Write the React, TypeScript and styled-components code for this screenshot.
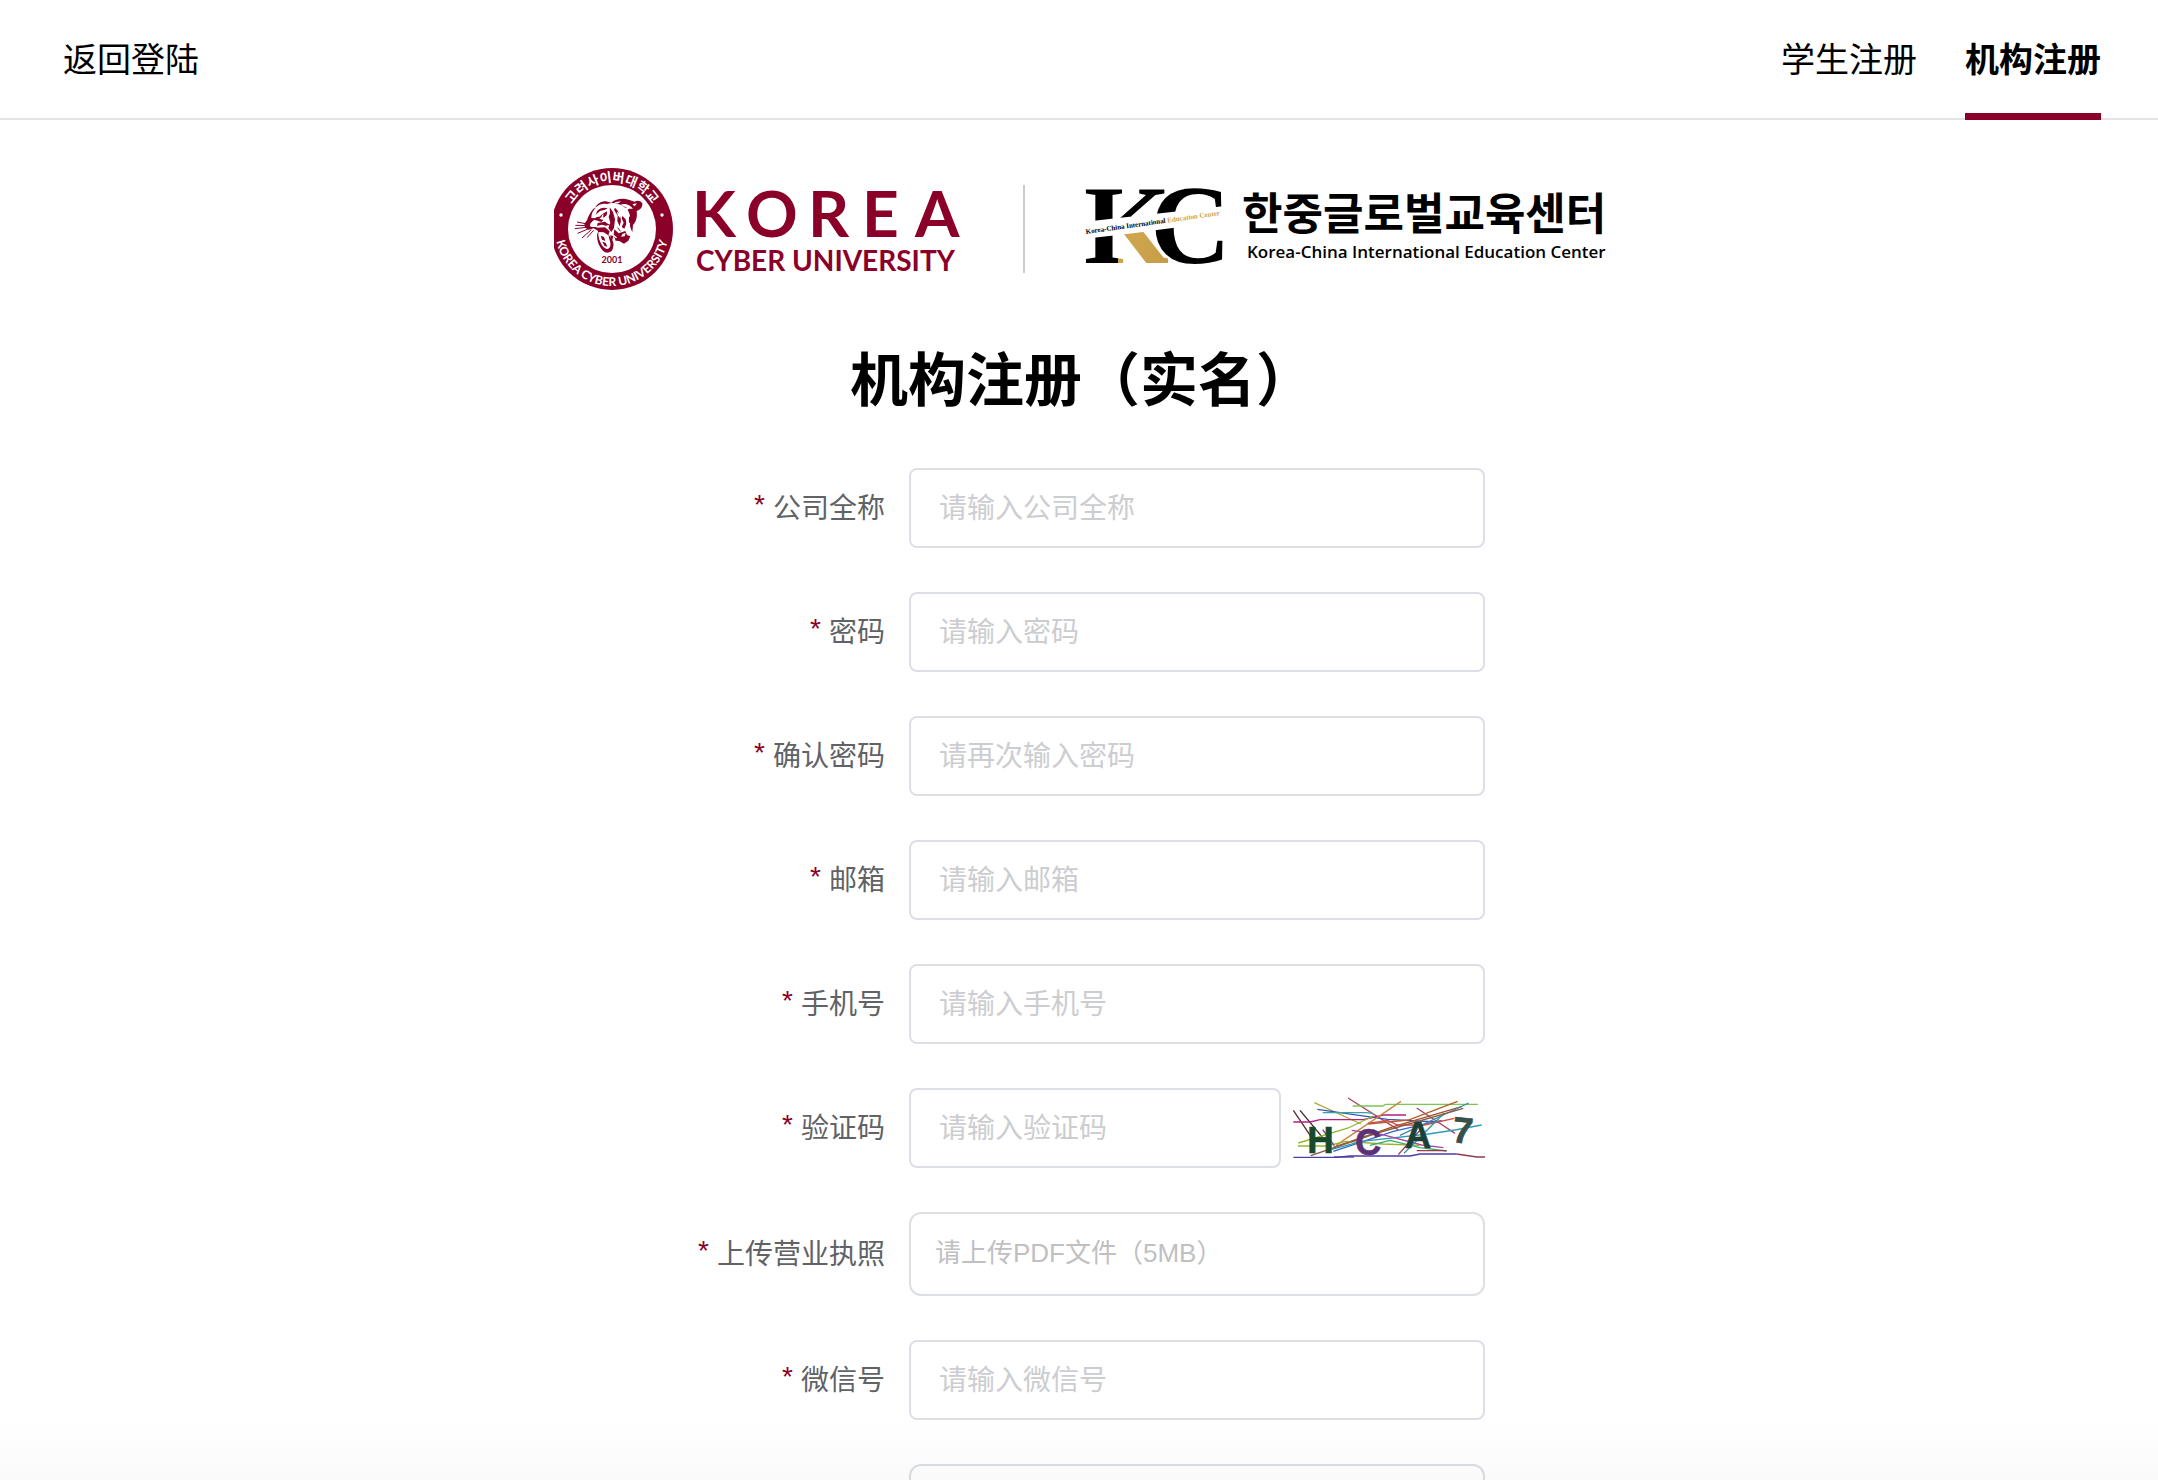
import React from "react";
import styled, { createGlobalStyle } from "styled-components";

const sans = `"Liberation Sans", "Noto Sans CJK SC", sans-serif`;
const brand = "#8a0029";

const GlobalStyle = createGlobalStyle`
  *, *::before, *::after { box-sizing: border-box; }
  body { margin: 0; background: #fff; color: #000; font-family: ${sans}; }
`;

const Page = styled.div`
  display: flex;
  flex-direction: column;
  height: 100vh;
`;

const Header = styled.header`
  display: flex;
  flex: none;
  align-items: stretch;
  justify-content: space-between;
  height: 120px;
  padding: 0 57px 0 63px;
  border-bottom: 2px solid #e4e4e4;
`;

const Tabs = styled.nav`
  display: flex;
  gap: 48px;
`;

const NavLink = styled.a<{ $active?: boolean }>`
  display: flex;
  align-items: center;
  margin-bottom: -2px;
  padding-top: 2px;
  border-bottom: 7px solid ${(p) => (p.$active ? brand : "transparent")};
  color: #000;
  font-size: 34px;
  font-weight: ${(p) => (p.$active ? 700 : 400)};
  text-decoration: none;
`;

const Main = styled.main`
  display: flex;
  flex: 1;
  flex-direction: column;
  align-items: center;
  min-height: 0;
  overflow-y: auto;
  scrollbar-width: none;
  padding: 40px 0 0 6px;
`;

const Logos = styled.svg`
  display: block;
  flex: none;
  width: 1056px;
  max-width: 100%;
  height: 140px;
`;

const Title = styled.h1`
  margin: 40px 0 46px;
  font-size: 58px;
  line-height: 82px;
  font-weight: 700;
`;

const Form = styled.form`
  display: flex;
  flex-direction: column;
  gap: 44px;
  width: 806px;
  max-width: 100%;
`;

const Row = styled.div`
  display: grid;
  grid-template-columns: 230px minmax(0, 1fr);
  align-items: center;
`;

const Label = styled.label`
  padding: 2px 24px 0 0;
  color: #606266;
  font-size: 28px;
  line-height: 40px;
  text-align: right;
  &::before {
    content: "*";
    margin-right: 8px;
    color: ${brand};
    vertical-align: 4px;
    line-height: 1;
  }
`;

const Control = styled.div`
  display: flex;
  grid-column: 2;
  align-items: center;
  gap: 12px;
`;

const Input = styled.input`
  flex: 1;
  min-width: 0;
  height: 80px;
  padding: 2px 28px 0;
  border: 2px solid #dcdfe6;
  border-radius: 8px;
  outline: none;
  background: #fff;
  color: #606266;
  font-family: inherit;
  font-size: 28px;
  &::placeholder { color: #cccdd0; opacity: 1; }
  &:focus { border-color: ${brand}; }
`;

const Upload = styled.label`
  display: flex;
  flex: 1;
  align-items: center;
  height: 84px;
  padding: 0 24px 8px;
  border: 2px solid #dcdfe3;
  border-radius: 12px;
  color: #c0c0c2;
  font-size: 26px;
  cursor: pointer;
`;

const FileInput = styled.input`
  width: 0;
  height: 0;
  opacity: 0;
`;

const CaptchaButton = styled.button`
  flex: none;
  width: 192px;
  height: 64px;
  padding: 0;
  border: 0;
  background: none;
  cursor: pointer;
  svg { display: block; width: 100%; height: 100%; }
`;

const BottomFade = styled.div`
  position: fixed;
  right: 0;
  bottom: 0;
  left: 0;
  height: 60px;
  background: linear-gradient(rgba(0, 0, 0, 0), rgba(0, 0, 0, 0.02));
  pointer-events: none;
`;

function Tiger() {
  return (
    <g transform="translate(16 30) scale(.3333)" fill={brand}>
      <path d="M74 56C80 42 92 34 108 34l16 4c14-12 34-14 52-9l18 6c9-5 18-3 23 5 1 12-6 20-17 23 2 16 0 31-11 42l-2 22c-5-10-8-19-7-27-8-7-5-17 0-22-2-12-7-21-17-27-12-9-25-12-39-12l-13 3c-12-3-24 0-37 12Z" />
      <path d="M70 56C60 68 55 78 51 91l-8 10 2 12 12 6 14-4 14 8-4 12c0 12 2 24 10 37 8 16 21 20 33 12 6-6 7-18 6-26l-8-15-7-10 3 15c5 12 5 22-1 27-8 5-17-2-23-12-6-12-10-24-9-34l5-12-13-6c-9 1-16 0-20-5l11-13 14-8-18-1c0-13 5-23 13-30Z" />
      <path d="M82 62c9-9 20-11 31-7l-10 5-12 2-14 12ZM78 82l20-4-10 8 12 4-6 6-20-6ZM100 70l12-6-2 12-10 8ZM119 52l10 14 6 22-3 26-8 12-9-12 6-16-5-18 4-10ZM135 53c10 9 17 23 18 40l-4 16-7-16 1-16-11-18ZM157 78l10 10 2 14-6 14-8-5 6-13-6-13ZM83 99l22-4 12 10-9 2-13-3-14 4ZM80 113l25-1 14 12-4 12-14-9-16-1ZM133 118l13 12 20-7 5 12 10 4-6 13-13 9-13-7-15-3 7-9-10-8ZM92 137l10 4 4 12-10-4ZM97 155l10 3 5 12-9-3ZM121 136l9 2-3 12 3 16-8-8Z" />
      <path fill="#fff" d="M152 44c14-5 29 2 37 12l-12 0c-7 7-12 6-19 4l12-7ZM126 42l12-6 16-2-9 6ZM158 66l16 2 5 8-12-3ZM169 86l8-3-1 18-5 3ZM140 65l10 6 1 14-7-8ZM98 47l12-4 12 4-14 3ZM187 43l14-3-7 9ZM158 131l9-2-3 10-11 1ZM73 97l9-6 2 5-7 5Z" />
      <g fill="none" stroke={brand} strokeWidth="3">
        <path d="M61 104l-40-8M58 111l-44 5M59 115l-36 15M64 119l-28 25M71 121l-20 22M60 107l-44-1M90 80l8-7M127 77v34M134 142l7 10M151 124l-8-11M106 100l19 8" />
      </g>
    </g>
  );
}

function LogoBanner() {
  return (
    <Logos viewBox="0 0 1056 140" role="img" aria-label="Korea Cyber University, Korea-China International Education Center">
      <defs>
        <path id="sealTop" d="M11 69a47 47 0 0 1 94 0" />
        <path id="sealBottom" d="M1 62v7a57 57 0 0 0 114 0v-7" />
        <clipPath id="monogramBlack"><path d="M520 20h160v33L520 71ZM520 88l44-5v40h-44Z" /></clipPath>
        <clipPath id="monogramGold"><path d="M564 83l50-6v50h-50Z" /></clipPath>
        <clipPath id="monogramSplit"><path d="M520 20h160v33L520 71ZM580 81l100-13v57h-100Z" /></clipPath>
        <linearGradient id="gold" x1="0" x2="1" y1="0" y2="1">
          <stop offset="0" stopColor="#d9b35c" />
          <stop offset="1" stopColor="#c69a45" />
        </linearGradient>
      </defs>

      <circle cx="58" cy="69" r="61" fill={brand} />
      <circle cx="58" cy="69" r="44" fill="#fff" />
      <circle cx="7" cy="55" r="1.7" fill="#fff" />
      <circle cx="108" cy="55" r="1.7" fill="#fff" />
      <text fill="#fff" fontFamily='"Noto Sans CJK KR", sans-serif' fontSize="13" fontWeight="700" textAnchor="middle">
        <textPath href="#sealTop" startOffset="50%">고려사이버대학교</textPath>
      </text>
      <text fill="#fff" fontFamily="Lato, sans-serif" fontSize="12" fontWeight="700" textAnchor="middle">
        <textPath href="#sealBottom" startOffset="50%">KOREA CYBER UNIVERSITY</textPath>
      </text>
      <Tiger />
      <text x="58" y="103" fill={brand} fontFamily="Lato, sans-serif" fontSize="9" fontWeight="700" textAnchor="middle">2001</text>

      <g fill={brand} fontFamily="Lato, sans-serif" fontWeight="700">
        <text x="138 192 254 308 361" y="77" fontSize="64">KOREA</text>
        <text x="142" y="111" fontSize="28">CYBER UNIVERSITY</text>
      </g>
      <path d="M470 25v88" stroke="#ccc" strokeWidth="2" />

      <g transform="translate(0 -8)" fontFamily='"Liberation Serif", serif' fontWeight="700">
        <g fontSize="112">
          <g clipPath="url(#monogramBlack)"><text x="530" y="111">K</text></g>
          <g clipPath="url(#monogramGold)"><text x="530" y="111" fill="url(#gold)">K</text></g>
          <g clipPath="url(#monogramSplit)">
            <text x="596" y="111" stroke="#fff" strokeWidth="3" paintOrder="stroke">C</text>
          </g>
        </g>
        <text transform="translate(532 82) rotate(-8)" fontSize="7">
          Korea-China International <tspan fill="#cfa14b">Education Center</tspan>
        </text>
      </g>

      <text x="688" y="70" fontFamily='"Noto Sans CJK KR", sans-serif' fontSize="44" fontWeight="700">한중글로벌교육센터</text>
      <text x="693" y="98" fontFamily='"Open Sans", sans-serif' fontSize="17" fontWeight="600">Korea-China International Education Center</text>
    </Logos>
  );
}

const strokes: [string, string][] = [
  ["#5a2a35", "M100 117l55 82"], ["#4a2030", "M120 117l75 90"],
  ["#b0a83a", "M163 94l140 64"], ["#a8485c", "M264 80l150 95M470 110l115 76"],
  ["#7cc653", "M278 104h90l8-5h278"], ["#b32078", "M100 152h50l30-7h130l60-14h68"],
  ["#3558b5", "M172 114l110 16 100 14 150 8"], ["#3a9fa8", "M188 124h130l20 2"],
  ["#c8863e", "M228 222L423 90"], ["#b35e2e", "M325 158l120-12 148-56"],
  ["#a3502a", "M220 228l180-62 205-60"], ["#96b52f", "M115 215l150-45 75-36"],
  ["#96b52f", "M114 224h85l60-14 110 8 110 4"], ["#3266d0", "M220 240l180-60 145-33"],
  ["#3487b8", "M420 192l206-97"], ["#2f9bb5", "M215 234l90-24 200-22 80-12 80-15"],
  ["#3bad62", "M330 222l60-15 90 22 80 10"], ["#d04a47", "M323 156l60-9 30 14 80 0 90-20"],
  ["#a845a8", "M275 177l90 12 120 32 65 8"], ["#3a9a92", "M432 246L552 126"],
  ["#6c4a9b", "M188 175l35 48"], ["#9b3b49", "M415 250l64-72M470 238h90"],
  ["#8a5b43", "M152 253l200-68 258-74"], ["#4d3dab", "M100 258h130l40-4h180l30-6h110"],
  ["#8b3d55", "M590 248l60 9h25"], ["#5236a8", "M222 257h60"],
];

function CaptchaPicture() {
  return (
    <svg viewBox="99 74 576 192" aria-hidden="true">
      <g fill="none" strokeWidth="4">
        {strokes.map(([color, d]) => <path key={d} d={d} stroke={color} />)}
      </g>
      <g fontFamily='"Liberation Sans", sans-serif' fontWeight="700" strokeWidth="2">
        <text x="142" y="245" fontSize="110" fill="#174a2b" stroke="#174a2b">H</text>
        <text x="286" y="250" fontSize="108" fill="#5c3175" stroke="#5c3175">C</text>
        <text x="434" y="229" fontSize="110" fill="#1b4038" stroke="#1b4038">A</text>
        <text x="577" y="215" fontSize="110" fill="#38504a" stroke="#38504a" transform="rotate(6 600 180)">7</text>
      </g>
    </svg>
  );
}

type Field = { id: string; label: string; hint: string; type?: string };

const account: Field[] = [
  { id: "company", label: "公司全称", hint: "请输入公司全称" },
  { id: "password", label: "密码", hint: "请输入密码", type: "password" },
  { id: "confirm", label: "确认密码", hint: "请再次输入密码", type: "password" },
  { id: "email", label: "邮箱", hint: "请输入邮箱", type: "email" },
  { id: "phone", label: "手机号", hint: "请输入手机号", type: "tel" },
];

function TextRow({ id, label, hint, type = "text", children }: Field & { children?: React.ReactNode }) {
  return (
    <Row>
      <Label htmlFor={id}>{label}</Label>
      <Control>
        <Input id={id} type={type} placeholder={hint} />
        {children}
      </Control>
    </Row>
  );
}

export default function App() {
  return (
    <Page>
      <GlobalStyle />
      <Header>
        <NavLink href="#login">返回登陆</NavLink>
        <Tabs>
          <NavLink href="#student">学生注册</NavLink>
          <NavLink href="#agency" $active aria-current="page">机构注册</NavLink>
        </Tabs>
      </Header>
      <Main>
        <LogoBanner />
        <Title>机构注册（实名）</Title>
        <Form>
          {account.map((f) => <TextRow key={f.id} {...f} />)}
          <TextRow id="captcha" label="验证码" hint="请输入验证码">
            <CaptchaButton type="button" aria-label="验证码"><CaptchaPicture /></CaptchaButton>
          </TextRow>
          <Row>
            <Label htmlFor="license">上传营业执照</Label>
            <Control>
              <Upload>
                请上传PDF文件（5MB）
                <FileInput id="license" type="file" accept="application/pdf" />
              </Upload>
            </Control>
          </Row>
          <TextRow id="wechat" label="微信号" hint="请输入微信号" />
          <Row>
            <Control>
              <Upload><FileInput type="file" aria-label="上传" /></Upload>
            </Control>
          </Row>
        </Form>
      </Main>
      <BottomFade />
    </Page>
  );
}
